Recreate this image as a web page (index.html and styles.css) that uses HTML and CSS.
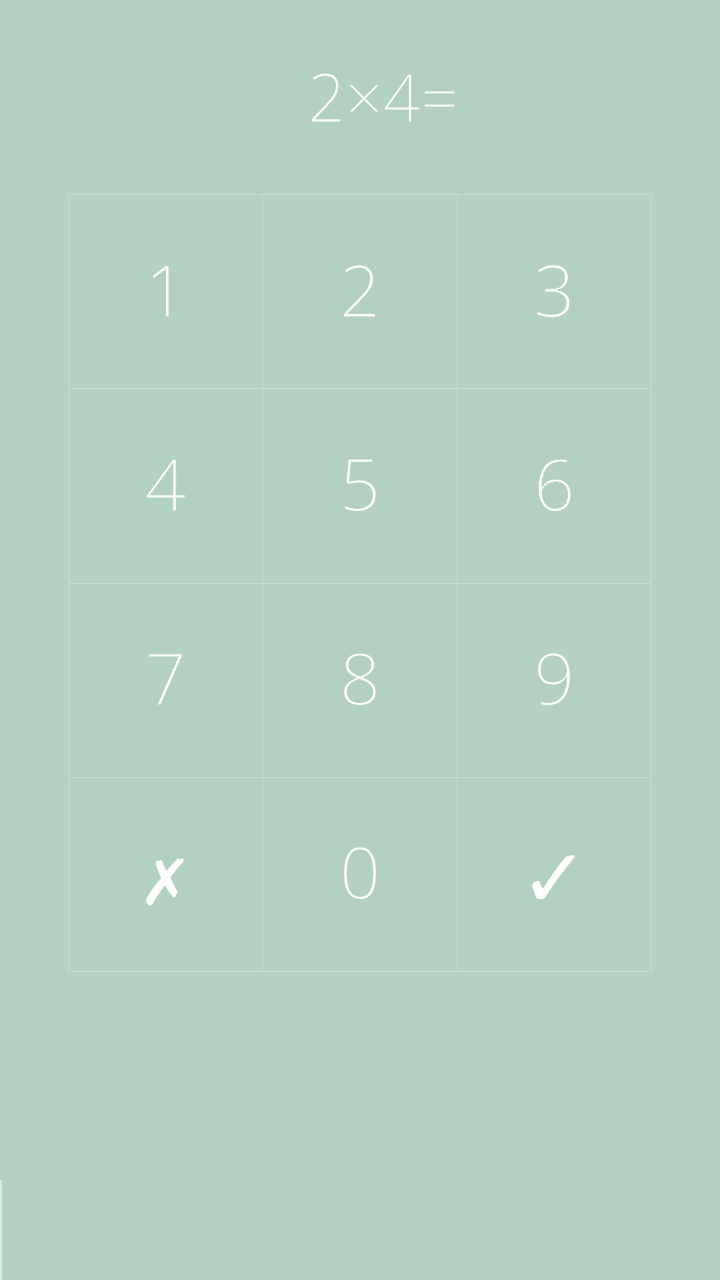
FILE: index.html
```html
<!DOCTYPE html>
<html lang="en">
<head>
    <meta charset="UTF-8">
    <meta name="viewport" content="width=device-width, initial-scale=1.0">
    <title>Multiplication</title>
    <link rel="stylesheet" href="styles.css">
</head>
<body>
    <div class="app">
        <div class="question">2×4=<span class="answer"></span></div>

        <div class="keypad">
            <button class="key">1</button>
            <button class="key">2</button>
            <button class="key">3</button>
            <button class="key">4</button>
            <button class="key">5</button>
            <button class="key">6</button>
            <button class="key">7</button>
            <button class="key">8</button>
            <button class="key">9</button>
            <button class="key key-sign key-cancel">✗</button>
            <button class="key">0</button>
            <button class="key key-sign key-ok">✓</button>
        </div>
    </div>
    <div class="edge"></div>
</body>
</html>
```

FILE: styles.css
```css
/* page */
html, body {
    margin: 0;
    height: 100%;
}
body {
    background-color: #b3d1c0;
    color: #ffffff;
    font-family: "Open Sans", "DejaVu Sans", sans-serif;
    font-weight: 300;
}
.app {
    display: flex;
    flex-direction: column;
    align-items: center;
}

/* question */
.question {
    padding-top: 51px;
    padding-left: 46px;
    font-size: 66px;
    line-height: 90px;
    height: 91px;
    white-space: nowrap;
    /* light look : stroke in background colour eats the glyph edges */
    -webkit-text-stroke: 0.8px #b3d1c0;
}
.answer {
    display: inline-block;
}

/* keypad */
.keypad {
    margin-top: 52px;
    width: 584px;
    height: 778px;
    display: grid;
    grid-template-columns: repeat(3, 1fr);
    grid-template-rows: repeat(4, 1fr);
    border-top: 1px solid #c5ddd0;
    border-left: 1px solid #c5ddd0;
    box-sizing: border-box;
}
.key {
    background: none;
    border: none;
    border-right: 1px solid #c5ddd0;
    border-bottom: 1px solid #c5ddd0;
    color: #ffffff;
    font-family: "Open Sans", sans-serif;
    font-weight: 300;
    font-size: 72px;
    padding: 0 0 6px 0;
    display: flex;
    align-items: center;
    justify-content: center;
    cursor: pointer;
    -webkit-text-stroke: 0.9px #b3d1c0;
}
.key-sign {
    font-family: "DejaVu Sans", sans-serif;
    font-weight: normal;
    font-size: 64px;
    -webkit-text-stroke: 0;
}
.key-cancel {
    padding: 18px 0 0 0;
}
.key-ok {
    font-size: 82px;
    padding: 8px 0 0 0;
}

/* thin line bottom left */
.edge {
    position: fixed;
    left: 0;
    bottom: 0;
    width: 2px;
    height: 100px;
    background: #dcebe2;
}
```
